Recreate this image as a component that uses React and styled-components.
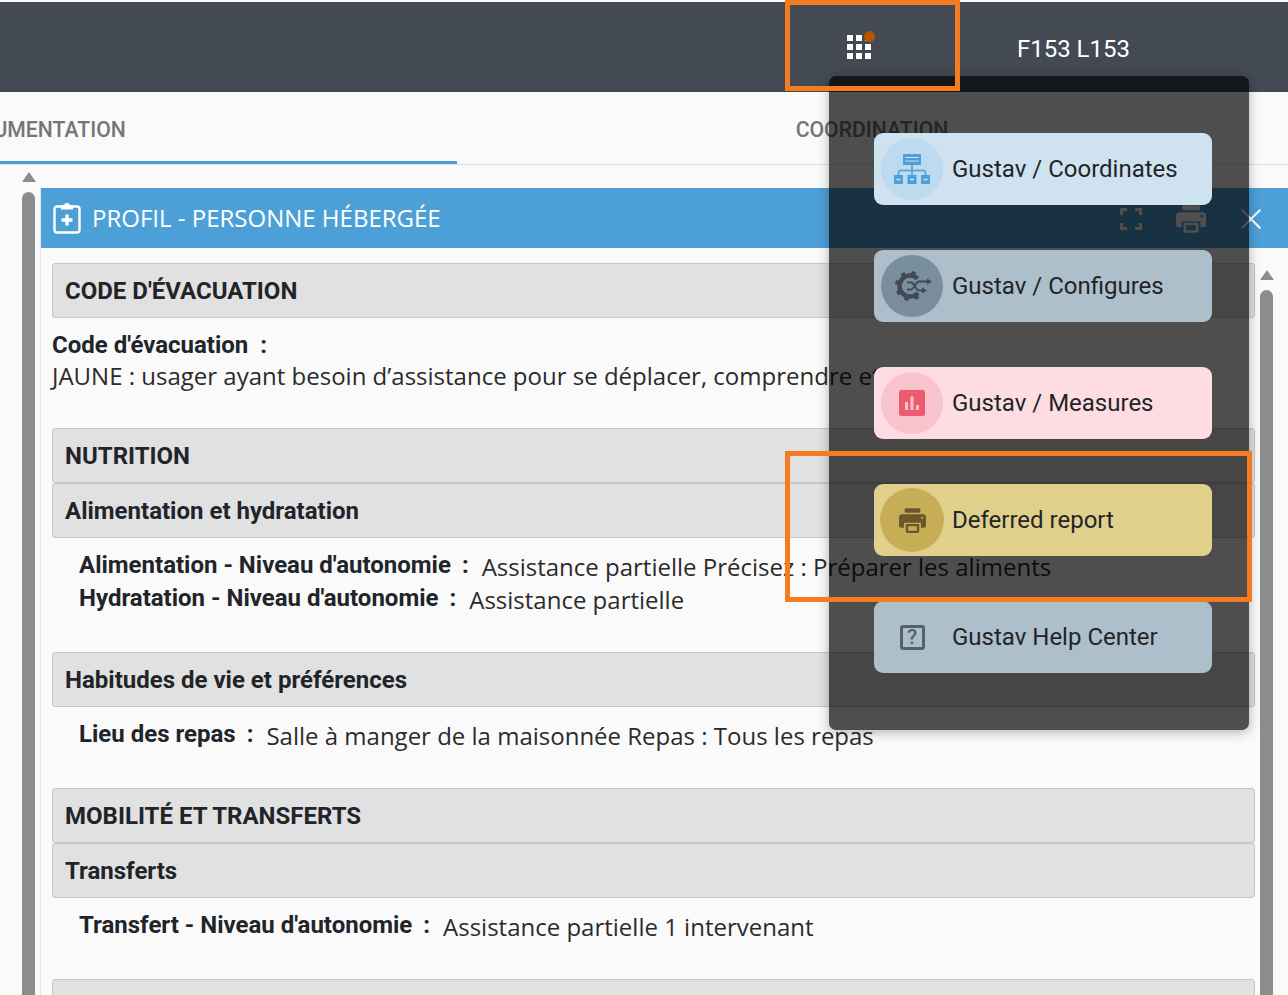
import React from "react";
import styled, { createGlobalStyle } from "styled-components";

const GlobalStyle = createGlobalStyle`
  * {
    box-sizing: border-box;
  }
  body {
    margin: 0;
    background: #fafafa;
    font-family: "Roboto", "Liberation Sans", sans-serif;
    color: #212529;
  }
`;

const Page = styled.div`
  position: relative;
  width: 1288px;
  height: 995px;
  padding-top: 2px;
  overflow: hidden;
  background: #fafafa;
`;

const Header = styled.header`
  height: 90px;
  background: #434a54;
  display: flex;
  align-items: center;
  justify-content: flex-end;
  gap: 146px;
  padding-right: 158px;
`;

const AppsButton = styled.div`
  position: relative;
  width: 24px;
  height: 24px;
  display: grid;
  grid-template-columns: repeat(3, 6px);
  grid-auto-rows: 6px;
  gap: 3px;

  i {
    background: #fff;
  }
`;

const Badge = styled.span`
  position: absolute;
  top: -4px;
  right: -4px;
  width: 11px;
  height: 11px;
  border-radius: 50%;
  background: #b85300;
`;

const UserName = styled.div`
  color: #fff;
  font-size: 24px;
  line-height: 28px;
  padding-top: 4px;
`;

const Tabs = styled.div`
  height: 73px;
  display: flex;
  margin-left: -380px;
  width: 1668px;
  border-bottom: 1px solid #dedede;
`;

const Tab = styled.div`
  width: ${(p) => p.$width}px;
  flex: none;
  display: flex;
  align-items: center;
  justify-content: center;
  padding-top: 5px;
  font-size: 21.2px;
  font-weight: 500;
  color: #757575;
  border-bottom: 3px solid ${(p) => (p.$active ? "#4d9fd8" : "transparent")};
`;

const Main = styled.div`
  display: flex;
  height: 830px;
`;

const Gutter = styled.div`
  width: 40px;
  flex: none;
  padding: 7px 0 0 22px;
`;

const ScrollTrack = styled.div`
  width: 13px;
  height: 100%;
  display: flex;
  flex-direction: column;
  align-items: center;
  gap: 10px;
`;

const ScrollArrow = styled.div`
  flex: none;
  width: 0;
  height: 0;
  border-left: 7px solid transparent;
  border-right: 7px solid transparent;
  border-bottom: 10px solid #8c8c8c;
`;

const ScrollThumb = styled.div`
  flex: 1;
  width: 13px;
  background: #8c8c8c;
  border-radius: 7px 7px 0 0;
`;

const Panel = styled.section`
  flex: 1;
  margin-top: 23px;
  border-left: 1px solid #e3e3e3;
  min-width: 0;
`;

const PanelHeader = styled.div`
  height: 60px;
  background: #4d9fd8;
  display: flex;
  align-items: center;
  color: #fff;
  padding-left: 12px;
`;

const PanelTitle = styled.h2`
  margin: 0 0 2px 11px;
  flex: 1;
  font-family: "Open Sans", sans-serif;
  font-weight: 400;
  font-size: 24px;
`;

const PanelTools = styled.div`
  display: flex;
  align-items: center;
  margin: 1px 27px 0 0;
  gap: 34px;
`;

const PanelBody = styled.div`
  display: flex;
  padding: 15px 0 0 11px;
  gap: 5px;
`;

const Content = styled.div`
  width: 1203px;
  flex: none;
`;

const InnerScroll = styled.div`
  height: 740px;
  padding-top: 7px;
`;

const Bar = styled.div`
  height: 55px;
  display: flex;
  align-items: center;
  padding-left: 12px;
  background: #e1e1e1;
  border: 1px solid #c8c8c8;
  border-radius: 3px;
  font-size: 24px;
  font-weight: 700;
  color: #212529;
`;

const Block = styled.div`
  padding: ${(p) => (p.$stacked ? "11px 0 35px" : "10px 0 38px 27px")};
`;

const Row = styled.div`
  display: flex;
  align-items: center;
  height: ${(p) => (p.$stacked ? "32px" : "33px")};
`;

const Label = styled.span`
  font-size: 24px;
  font-weight: 700;
  white-space: nowrap;
`;

const Colon = styled.span`
  font-size: 24px;
  font-weight: 700;
  margin: 0 13px 0 ${(p) => (p.$stacked ? "12px" : "11px")};
`;

const Value = styled.span`
  font-family: "Open Sans", sans-serif;
  font-size: 24px;
  white-space: nowrap;
  color: #2b2b2b;
  position: relative;
  top: ${(p) => (p.$stacked ? "-2px" : "2px")};
`;

const Overlay = styled.nav`
  position: absolute;
  left: 829px;
  top: 76px;
  width: 420px;
  height: 654px;
  padding: 57px 0 0 45px;
  display: flex;
  flex-direction: column;
  gap: 45px;
  border-radius: 7px;
  background: rgba(0, 0, 0, 0.69);
  box-shadow: 0 2px 12px rgba(0, 0, 0, 0.3);
`;

const MenuCard = styled.a`
  width: 338px;
  height: 72px;
  flex: none;
  display: flex;
  align-items: center;
  border-radius: 9px;
  background: ${(p) => p.$bg};
  font-size: 24px;
  color: #212529;
`;

const IconDisc = styled.span`
  flex: none;
  width: ${(p) => p.$size}px;
  height: ${(p) => p.$size}px;
  margin: 0 ${(p) => 40 - p.$size / 2}px 0 ${(p) => 38 - p.$size / 2}px;
  border-radius: 50%;
  display: flex;
  align-items: center;
  justify-content: center;
  background: ${(p) => p.$bg};
`;

const HelpBox = styled.span`
  width: 25px;
  height: 25px;
  border: 3px solid #54626e;
  border-radius: 3px;
  display: flex;
  align-items: center;
  justify-content: center;
  font-size: 21px;
  font-weight: 500;
  color: #54626e;
`;

const Callout = styled.div`
  position: absolute;
  left: ${(p) => p.$x}px;
  top: ${(p) => p.$y}px;
  width: ${(p) => p.$w}px;
  height: ${(p) => p.$h}px;
  border: 5px solid #f47b20;
  pointer-events: none;
`;

const PrinterIcon = ({ color, hole, width, height }) => (
  <svg width={width} height={height} viewBox="0 0 24 22">
    <rect x="5" y="0" width="14" height="4" rx="1" fill={color} />
    <path
      d="M3 5.5h18a3 3 0 0 1 3 3v7a2 2 0 0 1-2 2h-2.5v-4.5h-15v4.5H2a2 2 0 0 1-2-2v-7a3 3 0 0 1 3-3z"
      fill={color}
    />
    <path
      fillRule="evenodd"
      d="M6 14h12v6.5a1.5 1.5 0 0 1-1.5 1.5h-9A1.5 1.5 0 0 1 6 20.5zM8.2 16v4h7.6v-4z"
      fill={color}
    />
    <circle cx="20.6" cy="8.6" r="1" fill={hole} />
  </svg>
);

const ClipboardIcon = () => (
  <svg width="28" height="34" viewBox="0 0 28 34" fill="none" stroke="#fff">
    <path
      d="M9 5.5H4a2.5 2.5 0 0 0-2.5 2.5v21A2.5 2.5 0 0 0 4 31.5h20a2.5 2.5 0 0 0 2.5-2.5V8A2.5 2.5 0 0 0 24 5.5h-5"
      strokeWidth="2.4"
    />
    <path d="M9 7.5V5h3a2 2 0 0 1 4 0h3v2.5z" strokeWidth="2" fill="#fff" />
    <path d="M14 13.5v11M8.5 19h11" strokeWidth="3.4" />
  </svg>
);

const ExpandIcon = () => (
  <svg width="22" height="22" viewBox="0 0 22 22" fill="none" stroke="#fff" strokeWidth="3">
    <path d="M1.5 7V1.5H7M15 1.5h5.5V7M20.5 15v5.5H15M7 20.5H1.5V15" />
  </svg>
);

const CloseIcon = () => (
  <svg width="21" height="20" viewBox="-1 0 21 20" stroke="#fff" strokeWidth="2">
    <path d="M.7.7l18.6 18.6M19.3.7L.7 19.3" />
  </svg>
);

const HierarchyIcon = () => (
  <svg width="36" height="30" viewBox="0 0 36 30">
    <rect x="9" y="0" width="18" height="11" fill="#4d9fd8" />
    <path d="M11.5 3.5h13M11.5 7h13" stroke="#cfe2ef" strokeWidth="1.2" />
    <path
      d="M18 11v12M4.5 23v-5a1.5 1.5 0 0 1 1.5-1.5h24a1.5 1.5 0 0 1 1.5 1.5v5"
      fill="none"
      stroke="#4d9fd8"
      strokeWidth="1.5"
    />
    {[0, 13.5, 27].map((x) => (
      <g key={x}>
        <rect x={x} y="21" width="9" height="9" fill="#4d9fd8" />
        <rect x={x + 2.5} y="24.8" width="4" height="1.4" fill="#cfe2ef" />
      </g>
    ))}
  </svg>
);

const GearShuffleIcon = () => (
  <svg width="40" height="32" viewBox="-4 0 40 32" fill="none" stroke="#414a54">
    <circle cx="14" cy="16" r="10.5" strokeWidth="4.5" strokeDasharray="50 16" strokeDashoffset="-7.5" />
    {[60, 105, 150, 195, 240, 285].map((a) => (
      <rect
        key={a}
        x="25"
        y="13.8"
        width="4"
        height="4.4"
        fill="#414a54"
        stroke="none"
        transform={`rotate(${a} 14 16)`}
      />
    ))}
    <path d="M11 12.5h4c3.5 0 4.5 8 8 8h4M11 19.5h4c3.5 0 4.5-8 8-8h8" strokeWidth="1.8" />
    <path d="M31 8.5l5 3-5 3zM26 17.5l5 3-5 3z" fill="#414a54" stroke="none" />
  </svg>
);

const MeasuresIcon = () => (
  <svg width="26" height="26" viewBox="0 0 26 26">
    <rect width="26" height="26" rx="2.5" fill="#ec5b6e" />
    <path d="M7.5 12v8M13 6.5V20M18.5 15v5" stroke="#f9c3cd" strokeWidth="3" />
  </svg>
);

const menu = [
  {
    label: "Gustav / Coordinates",
    bg: "#cfe2ef",
    disc: "#bddbee",
    size: 62,
    icon: <HierarchyIcon />,
  },
  {
    label: "Gustav / Configures",
    bg: "#adbfca",
    disc: "#798f9d",
    size: 62,
    icon: <GearShuffleIcon />,
  },
  {
    label: "Gustav / Measures",
    bg: "#fddde2",
    disc: "#f9c3cd",
    size: 62,
    icon: <MeasuresIcon />,
  },
  {
    label: "Deferred report",
    bg: "#e1d08c",
    disc: "#c8ad57",
    size: 64,
    icon: <PrinterIcon color="#69592a" hole="#c8ad57" width={27} height={25} />,
  },
  {
    label: "Gustav Help Center",
    bg: "#adbfca",
    disc: "transparent",
    size: 62,
    icon: <HelpBox>?</HelpBox>,
  },
];

const App = () => {
  return (
    <Page>
      <GlobalStyle />
      <Header>
        <AppsButton>
          {Array.from({ length: 9 }).map((_, i) => (
            <i key={i} />
          ))}
          <Badge />
        </AppsButton>
        <UserName>F153 L153</UserName>
      </Header>

      <Tabs>
        <Tab $active $width={837}>
          DOCUMENTATION
        </Tab>
        <Tab $width={830}>COORDINATION</Tab>
      </Tabs>

      <Main>
        <Gutter>
          <ScrollTrack>
            <ScrollArrow />
            <ScrollThumb />
          </ScrollTrack>
        </Gutter>
        <Panel>
          <PanelHeader>
            <ClipboardIcon />
            <PanelTitle>PROFIL - PERSONNE HÉBERGÉE</PanelTitle>
            <PanelTools>
              <ExpandIcon />
              <PrinterIcon color="#fff" hole="#4d9fd8" width={30} height={28} />
              <CloseIcon />
            </PanelTools>
          </PanelHeader>
          <PanelBody>
            <Content>
              <Bar>CODE D'ÉVACUATION</Bar>
              <Block $stacked>
                <Row $stacked>
                  <Label>Code d'évacuation</Label>
                  <Colon $stacked>:</Colon>
                </Row>
                <Row $stacked>
                  <Value $stacked>JAUNE : usager ayant besoin d’assistance pour se déplacer, comprendre et</Value>
                </Row>
              </Block>

              <Bar>NUTRITION</Bar>
              <Bar>Alimentation et hydratation</Bar>
              <Block>
                <Row>
                  <Label>Alimentation - Niveau d'autonomie</Label>
                  <Colon>:</Colon>
                  <Value>Assistance partielle Précisez : Préparer les aliments</Value>
                </Row>
                <Row>
                  <Label>Hydratation - Niveau d'autonomie</Label>
                  <Colon>:</Colon>
                  <Value>Assistance partielle</Value>
                </Row>
              </Block>

              <Bar>Habitudes de vie et préférences</Bar>
              <Block>
                <Row>
                  <Label>Lieu des repas</Label>
                  <Colon>:</Colon>
                  <Value>Salle à manger de la maisonnée Repas : Tous les repas</Value>
                </Row>
              </Block>

              <Bar>MOBILITÉ ET TRANSFERTS</Bar>
              <Bar>Transferts</Bar>
              <Block>
                <Row>
                  <Label>Transfert - Niveau d'autonomie</Label>
                  <Colon>:</Colon>
                  <Value>Assistance partielle 1 intervenant</Value>
                </Row>
              </Block>

              <Bar />
            </Content>
            <InnerScroll>
              <ScrollTrack>
                <ScrollArrow />
                <ScrollThumb />
              </ScrollTrack>
            </InnerScroll>
          </PanelBody>
        </Panel>
      </Main>

      <Overlay>
        {menu.map((item) => (
          <MenuCard key={item.label} $bg={item.bg}>
            <IconDisc $bg={item.disc} $size={item.size}>
              {item.icon}
            </IconDisc>
            {item.label}
          </MenuCard>
        ))}
      </Overlay>

      <Callout $x={785} $y={0} $w={175} $h={91} />
      <Callout $x={785} $y={451} $w={467} $h={151} />
    </Page>
  );
};

export default App;
